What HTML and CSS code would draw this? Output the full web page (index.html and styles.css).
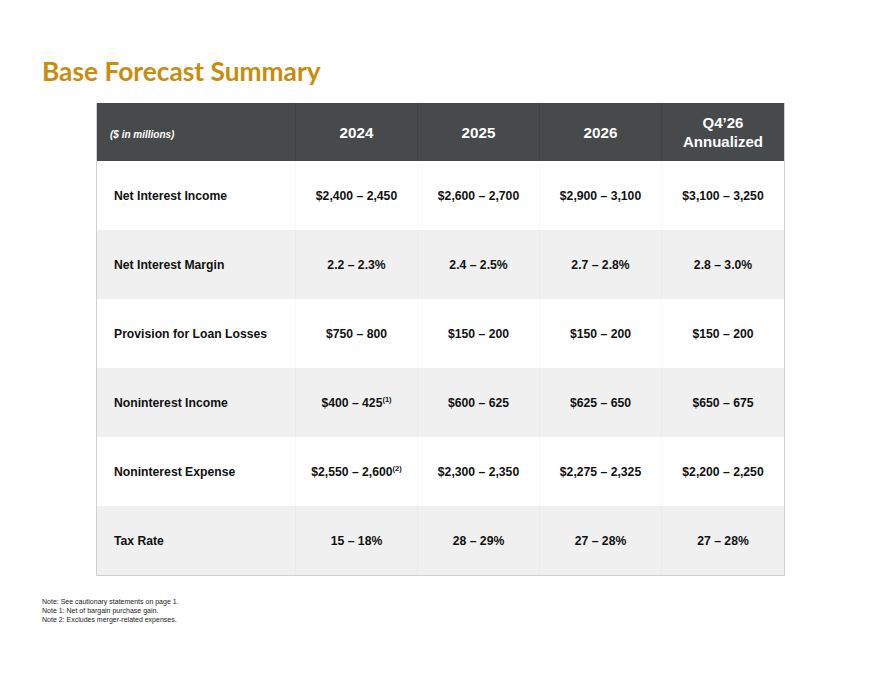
FILE: index.html
```html
<!DOCTYPE html>
<html>
<head>
<meta charset="utf-8">
<link rel="stylesheet" href="styles.css">
</head>
<body>
<div class="page">
  <h1 class="title">Base Forecast Summary</h1>
  <div class="table">
    <div class="row head">
      <div class="cell label units">($ in millions)</div>
      <div class="cell">2024</div>
      <div class="cell">2025</div>
      <div class="cell">2026</div>
      <div class="cell two">Q4’26<br>Annualized</div>
    </div>
    <div class="row">
      <div class="cell label">Net Interest Income</div>
      <div class="cell">$2,400 – 2,450</div>
      <div class="cell">$2,600 – 2,700</div>
      <div class="cell">$2,900 – 3,100</div>
      <div class="cell">$3,100 – 3,250</div>
    </div>
    <div class="row alt">
      <div class="cell label">Net Interest Margin</div>
      <div class="cell">2.2 – 2.3%</div>
      <div class="cell">2.4 – 2.5%</div>
      <div class="cell">2.7 – 2.8%</div>
      <div class="cell">2.8 – 3.0%</div>
    </div>
    <div class="row">
      <div class="cell label">Provision for Loan Losses</div>
      <div class="cell">$750 – 800</div>
      <div class="cell">$150 – 200</div>
      <div class="cell">$150 – 200</div>
      <div class="cell">$150 – 200</div>
    </div>
    <div class="row alt">
      <div class="cell label">Noninterest Income</div>
      <div class="cell"><span>$400 – 425<sup>(1)</sup></span></div>
      <div class="cell">$600 – 625</div>
      <div class="cell">$625 – 650</div>
      <div class="cell">$650 – 675</div>
    </div>
    <div class="row">
      <div class="cell label">Noninterest Expense</div>
      <div class="cell"><span>$2,550 – 2,600<sup>(2)</sup></span></div>
      <div class="cell">$2,300 – 2,350</div>
      <div class="cell">$2,275 – 2,325</div>
      <div class="cell">$2,200 – 2,250</div>
    </div>
    <div class="row alt">
      <div class="cell label">Tax Rate</div>
      <div class="cell">15 – 18%</div>
      <div class="cell">28 – 29%</div>
      <div class="cell">27 – 28%</div>
      <div class="cell">27 – 28%</div>
    </div>
  </div>
  <div class="notes">
    <p>Note: See cautionary statements on page 1.</p>
    <p>Note 1: Net of bargain purchase gain.</p>
    <p>Note 2: Excludes merger-related expenses.</p>
  </div>
</div>
</body>
</html>
```
FILE: styles.css
```css
* { box-sizing: border-box; }
html, body { margin: 0; padding: 0; background: #fff; }
body { font-family: "Liberation Sans", Arial, sans-serif; color: #111; }
.page { width: 880px; height: 680px; padding: 56px 0 0 42px; }
.title {
  margin: 0;
  font-family: Lato, "Noto Sans", sans-serif;
  font-weight: 700;
  font-size: 26.3px;
  line-height: 30px;
  color: #c98c0c;
}
.table {
  margin: 17px 0 0 54px;
  width: 689px;
  border: 1px solid #cfcfcf;
  border-top: none;
}
.row {
  display: grid;
  grid-template-columns: 198px 122px 122px 122px 1fr;
  height: 69px;
  background: #fff;
}
.row.alt { background: #f0f0f0; }
.row.head { height: 58px; background: #474a4b; color: #fff; }
.cell {
  display: flex;
  align-items: center;
  justify-content: center;
  text-align: center;
  font-weight: 700;
  font-size: 12.2px;
  border-left: 1px solid rgba(0,0,0,0.025);
}
.row.head .cell {
  font-size: 15.2px;
  line-height: 19px;
  border-left: 1px solid rgba(0,0,0,0.1);
}
.row.head .cell.two { font-size: 15px; }
.cell.label {
  justify-content: flex-start;
  padding-left: 17px;
  border-left: none;
}
.row.head .cell.units {
  font-size: 10px;
  font-style: italic;
  font-weight: 700;
  padding-left: 13px;
  padding-top: 4px;
  border-left: none;
}
sup { font-size: 7.5px; line-height: 0; vertical-align: 5px; }
.notes { margin-top: 21px; font-size: 7px; line-height: 9px; color: #222; }
.notes p { margin: 0; }
```
